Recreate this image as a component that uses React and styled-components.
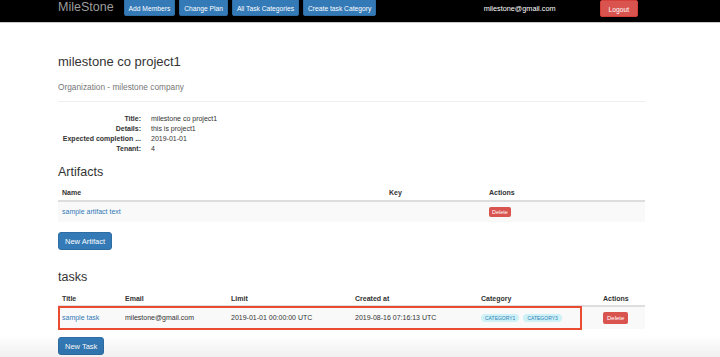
import React from "react";
import styled, { createGlobalStyle } from "styled-components";

const GlobalStyle = createGlobalStyle`
  body {
    margin: 0;
    background: #fff;
    font-family: "Liberation Sans", Helvetica, Arial, sans-serif;
    color: #333;
  }
  body::after {
    content: "";
    position: fixed;
    left: 0;
    right: 0;
    bottom: 0;
    height: 22px;
    background: linear-gradient(rgba(0, 0, 0, 0), rgba(0, 0, 0, 0.06));
    pointer-events: none;
  }
`;

const Navbar = styled.div`
  height: 22px;
  background: #000;
  border-bottom: 1px solid #c8c8c8;
  display: flex;
  align-items: flex-start;
  padding: 0 82px 0 58px;
  overflow: hidden;
`;

const Brand = styled.div`
  font-size: 12.5px;
  color: #9d9d9d;
  line-height: 15px;
  margin-right: 10px;
`;

const NavButtons = styled.div`
  display: flex;
  gap: 4px;
  margin-top: -3px;
`;

const NavButton = styled.div`
  height: 19px;
  line-height: 21px;
  padding: 0 4px;
  font-size: 6.7px;
  color: #fff;
  background: ${(p) => (p.danger ? "#d9534f" : "#337ab7")};
  border: 1px solid ${(p) => (p.danger ? "#d43f3a" : "#2e6da4")};
  border-radius: 2px;
  box-sizing: border-box;
  white-space: nowrap;
`;

const LogoutButton = styled(NavButton)`
  height: 17px;
  line-height: 18px;
  padding: 0 8px;
  margin-left: 44px;
`;

const Email = styled.div`
  margin-left: auto;
  font-size: 7.3px;
  color: #fff;
  line-height: 17px;
`;

const Container = styled.div`
  width: 587px;
  margin-left: 58px;
`;

const Title = styled.h1`
  font-size: 13px;
  font-weight: 500;
  line-height: 15px;
  margin: 31px 0 0;
`;

const Org = styled.p`
  font-size: 8.3px;
  color: #777;
  line-height: 12px;
  margin: 12px 0 0;
`;

const Rule = styled.hr`
  border: 0;
  border-top: 1px solid #eee;
  margin: 8px 0 12px;
`;

const DefList = styled.dl`
  display: grid;
  grid-template-columns: 83px 1fr;
  column-gap: 10px;
  margin: 0;
  font-size: 7px;
  line-height: 10px;
`;

const Term = styled.dt`
  font-weight: bold;
  text-align: right;
`;

const Desc = styled.dd`
  margin: 0;
`;

const SectionTitle = styled.h2`
  font-size: 12.5px;
  font-weight: 500;
  line-height: 14px;
  margin: ${(p) => p.top}px 0 0;
`;

const TableWrap = styled.div`
  position: relative;
  margin-top: ${(p) => p.top}px;
`;

const Table = styled.table`
  width: 100%;
  border-collapse: collapse;
  table-layout: fixed;
  font-size: 7px;
`;

const Th = styled.th`
  text-align: left;
  font-weight: bold;
  padding: ${(p) => p.pad || "4px 4px"};
  line-height: 9px;
  border-bottom: 2px solid #ddd;
`;

const Tr = styled.tr`
  background: #f9f9f9;
`;

const Td = styled.td`
  padding: ${(p) => p.pad}px 4px;
  line-height: 10px;
  vertical-align: middle;
  white-space: nowrap;
`;

const Link = styled.span`
  color: #337ab7;
`;

const DeleteButton = styled.span`
  display: inline-block;
  vertical-align: middle;
  background: #d9534f;
  color: #fff;
  font-size: ${(p) => p.size}px;
  line-height: ${(p) => p.h}px;
  padding: 0 ${(p) => p.px}px;
  border-radius: 2px;
`;

const Badge = styled.span`
  display: inline-block;
  vertical-align: middle;
  background: #cdf1f6;
  color: #2f7fb9;
  font-size: 5px;
  line-height: 8px;
  padding: 0 4px;
  border-radius: 5px;
  margin-right: 4px;
`;

const ActionButton = styled.div`
  display: inline-block;
  height: 18px;
  line-height: 18px;
  padding: 0 6px;
  margin-top: ${(p) => p.top}px;
  font-size: 7.5px;
  color: #fff;
  background: #337ab7;
  border: 1px solid #2e6da4;
  border-radius: 3px;
  box-sizing: border-box;
`;

const Highlight = styled.div`
  position: absolute;
  left: 0;
  top: 15px;
  width: 524px;
  height: 24px;
  border: 2px solid #ea4b33;
  box-sizing: border-box;
  pointer-events: none;
`;

export default function App() {
  return (
    <>
      <GlobalStyle />
      <Navbar>
        <Brand>MileStone</Brand>
        <NavButtons>
          <NavButton>Add Members</NavButton>
          <NavButton>Change Plan</NavButton>
          <NavButton>All Task Categories</NavButton>
          <NavButton>Create task Category</NavButton>
        </NavButtons>
        <Email>milestone@gmail.com</Email>
        <LogoutButton danger>Logout</LogoutButton>
      </Navbar>
      <Container>
        <Title>milestone co project1</Title>
        <Org>Organization - milestone company</Org>
        <Rule />
        <DefList>
          <Term>Title:</Term>
          <Desc>milestone co project1</Desc>
          <Term>Details:</Term>
          <Desc>this is project1</Desc>
          <Term>Expected completion ...</Term>
          <Desc>2019-01-01</Desc>
          <Term>Tenant:</Term>
          <Desc>4</Desc>
        </DefList>

        <SectionTitle top={11}>Artifacts</SectionTitle>
        <TableWrap top={5}>
          <Table>
            <colgroup>
              <col style={{ width: 327 }} />
              <col style={{ width: 100 }} />
              <col style={{ width: 160 }} />
            </colgroup>
            <thead>
              <tr>
                <Th pad="4px 4px 3px">Name</Th>
                <Th pad="4px 4px 3px">Key</Th>
                <Th pad="4px 4px 3px">Actions</Th>
              </tr>
            </thead>
            <tbody>
              <Tr>
                <Td pad={5}>
                  <Link>sample artifact text</Link>
                </Td>
                <Td pad={5}></Td>
                <Td pad={5}>
                  <DeleteButton size={5.5} h={10} px={3}>
                    Delete
                  </DeleteButton>
                </Td>
              </Tr>
            </tbody>
          </Table>
        </TableWrap>
        <ActionButton top={10}>New Artifact</ActionButton>

        <SectionTitle top={20}>tasks</SectionTitle>
        <TableWrap top={7}>
          <Table>
            <colgroup>
              <col style={{ width: 63 }} />
              <col style={{ width: 106 }} />
              <col style={{ width: 124 }} />
              <col style={{ width: 126 }} />
              <col style={{ width: 122 }} />
              <col style={{ width: 46 }} />
            </colgroup>
            <thead>
              <tr>
                <Th pad="3px 4px 2px">Title</Th>
                <Th pad="3px 4px 2px">Email</Th>
                <Th pad="3px 4px 2px">Limit</Th>
                <Th pad="3px 4px 2px">Created at</Th>
                <Th pad="3px 4px 2px">Category</Th>
                <Th pad="3px 4px 2px">Actions</Th>
              </tr>
            </thead>
            <tbody>
              <Tr>
                <Td pad={5}>
                  <Link>sample task</Link>
                </Td>
                <Td pad={5}>milestone@gmail.com</Td>
                <Td pad={5}>2019-01-01 00:00:00 UTC</Td>
                <Td pad={5}>2019-08-16 07:16:13 UTC</Td>
                <Td pad={5}>
                  <Badge>CATEGORY1</Badge>
                  <Badge>CATEGORY3</Badge>
                </Td>
                <Td pad={5}>
                  <DeleteButton size={6} h={12} px={4}>
                    Delete
                  </DeleteButton>
                </Td>
              </Tr>
            </tbody>
          </Table>
          <Highlight />
        </TableWrap>
        <ActionButton top={8}>New Task</ActionButton>
      </Container>
    </>
  );
}
